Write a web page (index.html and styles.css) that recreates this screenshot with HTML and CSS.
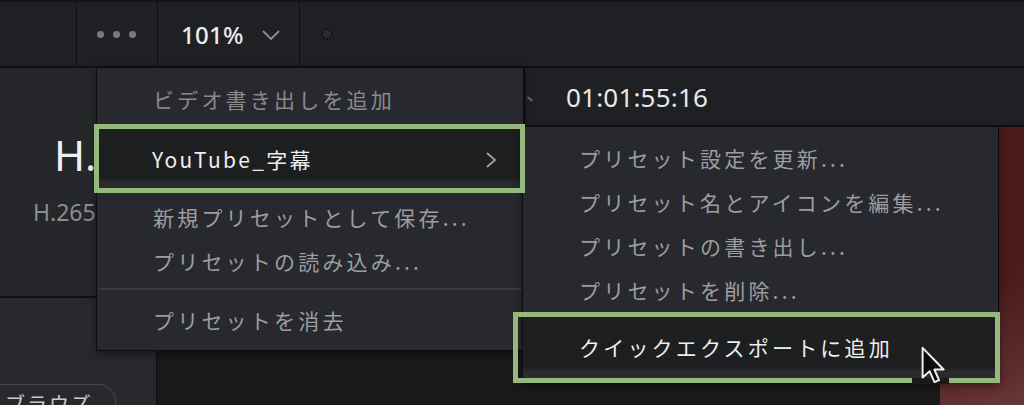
FILE: index.html
```html
<!DOCTYPE html>
<html lang="ja">
<head>
<meta charset="utf-8">
<title>Deliver</title>
<link rel="stylesheet" href="styles.css">
</head>
<body>
<div class="app">
  <div class="topbar">
    <div class="seg seg-a"></div>
    <div class="seg seg-dots"><span class="dot"></span><span class="dot"></span><span class="dot"></span></div>
    <div class="seg seg-zoom">
      <span class="zoom-val">101%</span>
      <svg class="zoom-chev" width="20" height="12" viewBox="0 0 20 12"><path d="M2 2 L10 10 L18 2" fill="none" stroke="#8e8e92" stroke-width="1.8"/></svg>
    </div>
    <div class="seg seg-rest"><span class="ring"></span></div>
  </div>
  <div class="main">
    <div class="leftcol">
      <div class="preset-card">
        <div class="big">H.265</div>
        <div class="sub">H.265 Main10</div>
      </div>
      <div class="browse-area"><span class="pill">ブラウズ</span></div>
    </div>
    <div class="center"></div>
    <div class="viewer">
      <div class="tcbar"><span class="tick"></span><span class="tc">01:01:55:16</span></div>
      <div class="viewport"><div class="frame"></div></div>
    </div>
  </div>

  <div class="menu menu-main">
    <div class="item disabled">ビデオ書き出しを追加</div>
    <div class="item hl"><span>YouTube_字幕</span>
      <svg class="sub-chev" width="12" height="18" viewBox="0 0 12 18"><path d="M2 2 L10 9 L2 16" fill="none" stroke="#a2a2a6" stroke-width="1.8"/></svg>
    </div>
    <div class="item">新規プリセットとして保存...</div>
    <div class="item">プリセットの読み込み...</div>
    <div class="sep"></div>
    <div class="item">プリセットを消去</div>
  </div>

  <div class="menu menu-sub">
    <div class="item">プリセット設定を更新...</div>
    <div class="item">プリセット名とアイコンを編集...</div>
    <div class="item">プリセットの書き出し...</div>
    <div class="item">プリセットを削除...</div>
    <div class="item hl hl-sub">クイックエクスポートに追加</div>
  </div>

  <div class="mark mark-1"></div>
  <div class="mark mark-2"></div>

  <div class="cursor">
    <span class="gap"></span>
    <svg class="arrow" width="27" height="40" viewBox="0 0 22 33"><path d="M2 1.5 L2 26 L7.8 20.8 L11.8 29.8 L15.6 28.2 L11.7 19.4 L19.4 19.4 Z" fill="#0c0c0c" stroke="#f2f2f2" stroke-width="1.6" stroke-linejoin="round"/></svg>
  </div>
</div>
</body>
</html>
```

FILE: styles.css
```css
* { box-sizing: border-box; }
html, body { margin: 0; padding: 0; }
body {
  width: 1024px;
  height: 405px;
  overflow: hidden;
  background: #19191a;
  font-family: "Noto Sans CJK JP", "Noto Sans", sans-serif;
}
.app {
  position: relative;
  width: 1024px;
  height: 405px;
  overflow: hidden;
}

/* top bar */
.topbar {
  display: flex;
  height: 68px;
  background: #1f2024;
  border-top: 2px solid #141416;
  border-bottom: 2px solid #111113;
}
.seg { height: 100%; display: flex; align-items: center; border-right: 1px solid #0f0f10; }
.seg-a { width: 77px; }
.seg-dots { width: 81px; padding-left: 20px; gap: 9px; }
.dot { width: 7px; height: 7px; border-radius: 50%; background: #7b7b7f; }
.seg-zoom { width: 142px; padding-left: 23px; }
.zoom-val {
  font-family: "Noto Sans", sans-serif;
  font-weight: 500;
  font-size: 24px;
  color: #ececec;
  letter-spacing: 0.3px;
}
.zoom-chev { margin-left: 17px; margin-top: 2px; }
.seg-rest { flex: 1; padding-left: 22px; border-right: none; }
.ring {
  width: 10px; height: 10px; border-radius: 50%;
  background: #2a2a2e;
  border: 1.5px solid #070708;
  box-shadow: 0 0 0 0.5px #4a4a4e inset;
}

/* main area */
.main {
  display: grid;
  grid-template-columns: 157px 367px 1fr;
  height: 337px;
}
.leftcol {
  display: flex;
  flex-direction: column;
  border-right: 1px solid #0e0e0f;
}
.preset-card {
  height: 230px;
  background: #26272b;
  border-bottom: 2px solid #0f0f11;
  padding: 66px 0 0 54px;
}
.big {
  font-family: "Noto Sans", sans-serif;
  font-size: 42px;
  line-height: 42px;
  color: #f0f0f0;
  white-space: nowrap;
}
.sub {
  margin: 20px 0 0 -21px;
  font-family: "Noto Sans", sans-serif;
  font-size: 23px;
  color: #8d8d90;
  white-space: nowrap;
}
.browse-area {
  flex: 1;
  background: #28292d;
  padding-top: 86px;
  overflow: hidden;
}
.pill {
  display: inline-block;
  margin-left: -22px;
  padding: 4px 22px 0 26px;
  height: 36px;
  border: 1.5px solid #47484d;
  border-radius: 17px;
  font-size: 20px;
  line-height: 30px;
  color: #c9c9cb;
  letter-spacing: 2px;
}
.center { background: #19191a; }
.viewer { display: flex; flex-direction: column; }
.tcbar {
  height: 59px;
  background: #1f2023;
  border-left: 1px solid #0f0f10;
  border-bottom: 2px solid #101012;
  display: flex;
  align-items: center;
  padding-left: 41px;
  position: relative;
}
.tick {
  position: absolute;
  left: 2px; top: 30px;
  width: 6px; height: 1.5px;
  background: #6a6a6e;
  transform: rotate(35deg);
}
.tc {
  font-family: "Noto Sans", sans-serif;
  font-size: 26px;
  color: #e8e8e8;
  letter-spacing: 0.2px;
}
.viewport { flex: 1; background: #19191a; }
.frame {
  margin-left: 416px;
  height: 100%;
  background: linear-gradient(165deg, #4a1a1b 0%, #4b1c1d 55%, #5e2d2e 85%, #6d3d3e 100%);
}

/* menus */
.menu {
  position: absolute;
  background: #28292e;
  border: 1px solid #0d0d0e;
  box-shadow: 0 3px 8px rgba(0,0,0,0.45);
  display: flex;
  flex-direction: column;
  padding-top: 9px;
}
.menu-main { left: 96px; top: 67px; width: 428px; height: 284px; }
.menu-sub { left: 522px; top: 126px; width: 477px; height: 256px; }
.item {
  height: 44px;
  flex: none;
  display: flex;
  align-items: center;
  padding-left: 56px;
  font-size: 21px;
  letter-spacing: 3.2px;
  color: #9d9da0;
  white-space: nowrap;
}
.item.disabled { color: #8a8a8d; }
.item.hl {
  height: 65px;
  margin: 5px 0 4px;
  background: linear-gradient(180deg, #1e1f21 0%, #1d1e20 80%, #2a2b2e 88%, #2a2b2e 100%);
  color: #ededed;
  justify-content: space-between;
  padding-right: 26px;
  letter-spacing: 2.3px;
}
.menu-main .item.hl { padding-left: 55px; }
.item.hl-sub {
  height: 66px;
  margin: 2px 0 0;
  padding-left: 56px;
  letter-spacing: 3.2px;
  justify-content: flex-start;
}
.sub-chev { margin-top: 2px; }
.sep {
  height: 2px;
  margin: 5px 2px 8px;
  background: #3c3d42;
  flex: none;
}

/* annotation boxes */
.mark {
  position: absolute;
  border: 5px solid #95b97c;
}
.mark-1 { left: 94px; top: 124px; width: 431px; height: 69px; }
.mark-2 { left: 513px; top: 312px; width: 487px; height: 71px; }

.cursor {
  position: absolute;
  left: 912px;
  top: 346px;
  width: 37px;
  height: 42px;
}
.gap {
  position: absolute;
  left: 0; top: 32px;
  width: 37px; height: 6px;
  background: #1a1a1b;
}
.arrow { position: absolute; left: 8px; top: 0; }
```
